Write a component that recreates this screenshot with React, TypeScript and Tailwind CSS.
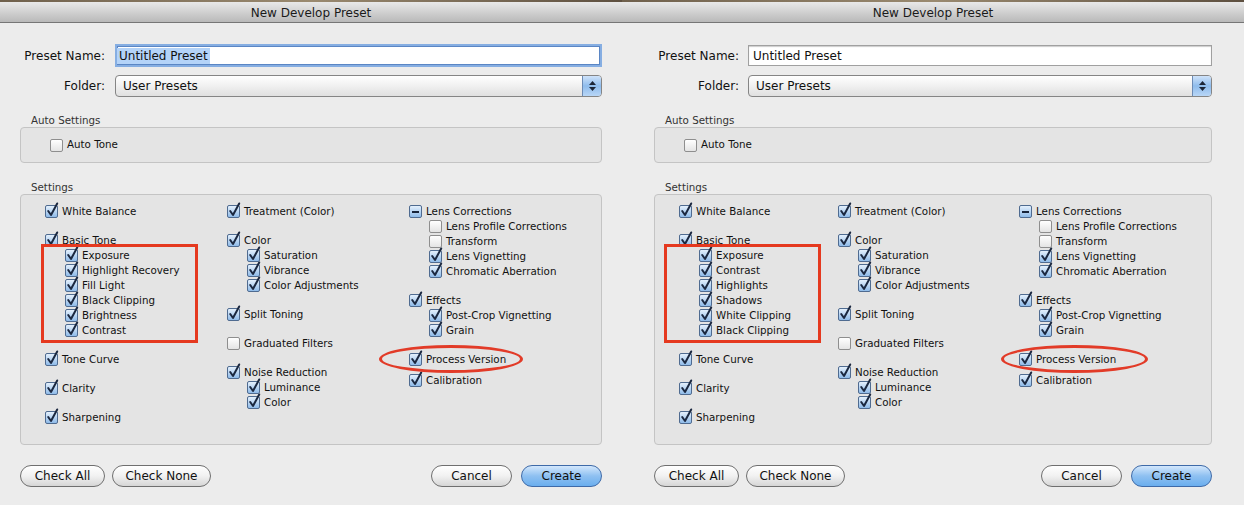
import clsx from 'clsx';

type State = 'on' | 'off' | 'mixed';
type Sub = { label: string; state?: State };
type Item = { label: string; state?: State; subs?: Sub[]; mt?: string };

const Check = ({ state = 'on' }: { state?: State }) => (
  <span
    className={clsx(
      'relative inline-block h-[13px] w-[13px] shrink-0 rounded-[2px] border',
      state === 'off'
        ? 'border-[#8e8e8e] bg-linear-to-b from-white to-[#e4e4e4]'
        : 'border-[#4f6b90] bg-linear-to-b from-[#e4f0fc] to-[#8fbbe9]'
    )}
  >
    {state === 'on' && (
      <svg className="absolute -top-[4px] left-[0px]" width="13" height="15" viewBox="0 0 13 15">
        <path
          d="M2.2 9 L5 13 L11.2 1.5"
          fill="none"
          stroke="#1b2840"
          strokeWidth="2"
          strokeLinecap="round"
          strokeLinejoin="round"
        />
      </svg>
    )}
    {state === 'mixed' && <span className="absolute left-[2px] right-[2px] top-[5px] h-[2px] bg-[#17233a]" />}
  </span>
);

const Row = ({ label, state }: { label: string; state?: State }) => (
  <div className="flex h-[15px] items-center gap-[4px] whitespace-nowrap">
    <Check state={state} />
    <span className="text-[10.3px] text-[#111]">{label}</span>
  </div>
);

const Column = ({ items, width }: { items: Item[]; width: string }) => (
  <div className={clsx('flex flex-col', width)}>
    {items.map((it, i) => (
      <div key={it.label} className={i === 0 ? '' : it.mt ?? 'mt-[14px]'}>
        <Row label={it.label} state={it.state} />
        {it.subs && (
          <div className="flex flex-col pl-[20px]">
            {it.subs.map((s) => (
              <Row key={s.label} label={s.label} state={s.state} />
            ))}
          </div>
        )}
      </div>
    ))}
  </div>
);

const Pill = ({ children, w, primary }: { children: string; w: string; primary?: boolean }) => (
  <button
    className={clsx(
      'flex h-[22px] items-center justify-center rounded-full border text-[12px] text-[#111]',
      w,
      primary
        ? 'border-[#3e6aa8] bg-linear-to-b from-[#d3e7fc] via-[#8ec0f1] to-[#6aaeee]'
        : 'border-[#6f6f6f] bg-linear-to-b from-white via-[#f1f1f1] to-[#d6d6d6]'
    )}
  >
    {children}
  </button>
);

const col2: Item[] = [
  { label: 'Treatment (Color)' },
  { label: 'Color', subs: [{ label: 'Saturation' }, { label: 'Vibrance' }, { label: 'Color Adjustments' }] },
  { label: 'Split Toning' },
  { label: 'Graduated Filters', state: 'off' },
  { label: 'Noise Reduction', subs: [{ label: 'Luminance' }, { label: 'Color' }] },
];

const col3: Item[] = [
  {
    label: 'Lens Corrections',
    state: 'mixed',
    subs: [
      { label: 'Lens Profile Corrections', state: 'off' },
      { label: 'Transform', state: 'off' },
      { label: 'Lens Vignetting' },
      { label: 'Chromatic Aberration' },
    ],
  },
  { label: 'Effects', subs: [{ label: 'Post-Crop Vignetting' }, { label: 'Grain' }] },
  { label: 'Process Version' },
  { label: 'Calibration', mt: 'mt-[6px]' },
];

const makeCol1 = (tone: string[]): Item[] => [
  { label: 'White Balance' },
  { label: 'Basic Tone', subs: tone.map((t) => ({ label: t })) },
  { label: 'Tone Curve' },
  { label: 'Clarity' },
  { label: 'Sharpening' },
];

const Dialog = ({ left }: { left: boolean }) => {
  const tone = left
    ? ['Exposure', 'Highlight Recovery', 'Fill Light', 'Black Clipping', 'Brightness', 'Contrast']
    : ['Exposure', 'Contrast', 'Highlights', 'Shadows', 'White Clipping', 'Black Clipping'];

  return (
    <div className="flex w-[622px] flex-col">
      {/* title bar */}
      <div className="h-[2px] bg-linear-to-r from-[#6f604c] via-[#9a8a70] to-[#5e5040]" />
      <div className="flex h-[21px] items-center justify-center border-b border-[#767676] bg-linear-to-b from-[#e9e9e9] to-[#b9b9b9] pt-[2px] text-[12px] text-[#1a1a1a]">
        New Develop Preset
      </div>

      <div className={clsx('flex flex-col', left ? 'px-[20px]' : 'px-[32px]')}>
        {/* preset name */}
        <div className="mt-[21px] flex h-[23px] items-center">
          <span className="w-[85px] shrink-0 text-right text-[12px] text-[#111]">Preset Name:</span>
          <div
            className={clsx(
              'flex flex-1 items-center bg-white',
              left
                ? 'ml-[10px] h-[23px] border-2 border-[#86aee2] shadow-[inset_0_0_0_1px_#5b86c4]'
                : 'ml-[9px] h-[21px] border border-[#a0a0a0] shadow-[inset_0_1px_1px_#ccc]'
            )}
          >
            <span
              className={clsx(
                'text-[12px] text-[#111]',
                left ? 'bg-[#b4d3f8] px-[2px] leading-[16px]' : 'ml-[4px]'
              )}
            >
              Untitled Preset
            </span>
          </div>
        </div>

        {/* folder */}
        <div className="mt-[8px] flex h-[22px] items-center">
          <span className="w-[85px] shrink-0 text-right text-[12px] text-[#111]">Folder:</span>
          <div
            className={clsx(
              'flex h-[22px] flex-1 items-stretch overflow-hidden rounded-[4px] border border-[#858585] bg-linear-to-b from-white via-[#f0f0f0] to-[#e0e0e0]',
              left ? 'ml-[10px]' : 'ml-[9px]'
            )}
          >
            <span className="flex flex-1 items-center pl-[7px] text-[12px] text-[#111]">User Presets</span>
            <span className="flex w-[19px] flex-col items-center justify-center gap-[2px] border-l border-[#6c8bb5] bg-linear-to-b from-[#cfe3fa] via-[#8fbcec] to-[#b8d6f6]">
              <svg width="7" height="4" viewBox="0 0 7 4">
                <path d="M0 4 L3.5 0 L7 4 Z" fill="#1c2536" />
              </svg>
              <svg width="7" height="4" viewBox="0 0 7 4">
                <path d="M0 0 L3.5 4 L7 0 Z" fill="#1c2536" />
              </svg>
            </span>
          </div>
        </div>

        {/* auto settings */}
        <div className="mt-[17px] pl-[11px] text-[10.3px] leading-[13px] text-[#333]">Auto Settings</div>
        <div className="flex h-[36px] items-center rounded-[4px] border border-[#c4c4c4] bg-[#e4e4e4] pl-[29px]">
          <Row label="Auto Tone" state="off" />
        </div>

        {/* settings */}
        <div className="mt-[18px] pl-[11px] text-[10.3px] leading-[13px] text-[#333]">Settings</div>
        <div className="relative flex h-[251px] rounded-[4px] border border-[#c4c4c4] bg-[#e4e4e4] pl-[24px] pt-[9px]">
          <Column items={makeCol1(tone)} width={left ? 'w-[182px]' : 'w-[159px]'} />
          <Column items={col2} width={left ? 'w-[182px]' : 'w-[181px]'} />
          <Column items={col3} width="w-[170px]" />

          {/* annotations */}
          <span
            className={clsx(
              'pointer-events-none absolute top-[49px] h-[99px] w-[157px] border-[3px] border-[#e5391f]',
              left ? 'left-[20px]' : 'left-[9px]'
            )}
          />
          <span
            className={clsx(
              'pointer-events-none absolute top-[150px] h-[28px] rounded-[50%] border-[3px] border-[#e23b28]',
              left ? 'left-[358px] w-[144px]' : 'left-[346px] w-[147px]'
            )}
          />
        </div>

        {/* buttons */}
        <div className="mt-[20px] flex items-center">
          <Pill w="w-[85px]">Check All</Pill>
          <div className="ml-[7px]">
            <Pill w="w-[99px]">Check None</Pill>
          </div>
          <div className="flex-1" />
          <Pill w="w-[81px]">Cancel</Pill>
          <div className="ml-[9px]">
            <Pill w="w-[81px]" primary>
              Create
            </Pill>
          </div>
        </div>
      </div>
    </div>
  );
}

export default function App() {
  return (
    <div className="flex h-[505px] w-[1244px] overflow-hidden bg-[#ececec] font-['DejaVu_Sans',sans-serif]">
      <Dialog left />
      <Dialog left={false} />
    </div>
  );
}
